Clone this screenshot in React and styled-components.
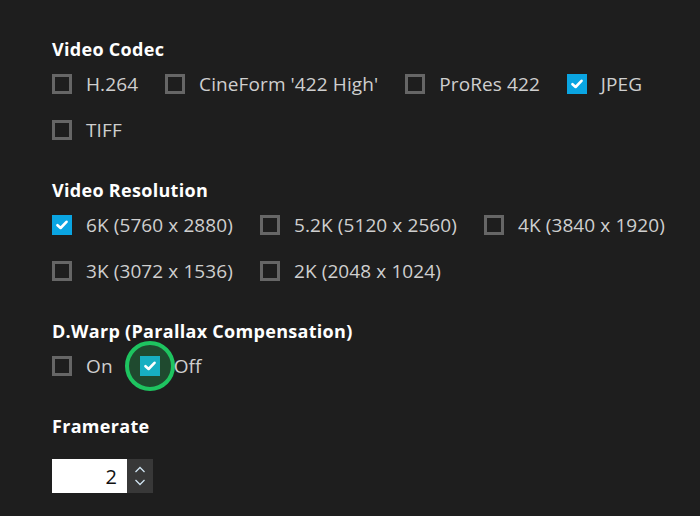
import React from "react";
import styled, { createGlobalStyle } from "styled-components";

const Global = createGlobalStyle`
  html, body { margin: 0; padding: 0; background: #1e1e1e; }
  body { font-family: "Open Sans", "Liberation Sans", sans-serif; }
`;

const Page = styled.div`
  width: 700px;
  height: 516px;
  box-sizing: border-box;
  padding: 39px 0 0 52px;
  background: #1e1e1e;
  display: flex;
  flex-direction: column;
`;

const Section = styled.section`
  display: flex;
  flex-direction: column;
  margin-bottom: 35px;
`;

const Heading = styled.h2`
  margin: 0 0 10px;
  font-family: "Open Sans", "Liberation Sans", sans-serif;
  font-weight: 700;
  font-size: 18px;
  line-height: 20px;
  letter-spacing: 0.3px;
  color: #ffffff;
`;

const Options = styled.div`
  display: flex;
  flex-wrap: wrap;
  column-gap: 27px;
  row-gap: 16px;
  max-width: 640px;
`;

const Item = styled.label`
  position: relative;
  display: flex;
  align-items: center;
  gap: 14px;
  height: 30px;
  font-size: 19px;
  font-weight: 400;
  color: #cfcfcf;
  letter-spacing: 0.1px;
`;

const Box = styled.span`
  position: relative;
  z-index: 1;
  width: 20px;
  height: 20px;
  box-sizing: border-box;
  flex: none;
  display: flex;
  align-items: center;
  justify-content: center;
  background: ${(p) => (p.$checked ? p.$color || "#0aa5e2" : "#1e1e1e")};
  border: ${(p) => (p.$checked ? "none" : "3px solid #666666")};
`;

const Ring = styled.span`
  position: absolute;
  left: -15px;
  top: -10px;
  width: 50px;
  height: 50px;
  box-sizing: border-box;
  border-radius: 50%;
  border: 4px solid #1ec460;
  background: #1f4a2f;
  z-index: 0;
`;

const LabelText = styled.span`
  position: relative;
  z-index: 1;
  white-space: nowrap;
`;

const Check = () => (
  <svg width="12" height="10" viewBox="0 0 12 10">
    <path d="M1.5 5.2 L4.6 8 L10.5 1.8" fill="none" stroke="#ffffff" strokeWidth="2.6" strokeLinecap="round" strokeLinejoin="round" />
  </svg>
);

const Option = ({ label, checked, color, ring }) => (
  <Item>
    {ring && <Ring />}
    <Box $checked={checked} $color={color}>{checked && <Check />}</Box>
    <LabelText>{label}</LabelText>
  </Item>
);

const Stepper = styled.div`
  display: flex;
  height: 34px;
  margin-top: 13px;
`;

const NumberField = styled.input`
  width: 75px;
  height: 34px;
  box-sizing: border-box;
  border: none;
  outline: none;
  background: #ffffff;
  color: #111111;
  text-align: right;
  padding: 0 10px 0 0;
  font-family: "Open Sans", "Liberation Sans", sans-serif;
  font-size: 20px;
`;

const Spin = styled.div`
  width: 26px;
  height: 34px;
  background: #383838;
  display: flex;
  flex-direction: column;
  align-items: center;
  justify-content: center;
  gap: 6px;
`;

const Chevron = ({ up }) => (
  <svg width="12" height="7" viewBox="0 0 12 7">
    <path d={up ? "M1.5 6 L6 1.5 L10.5 6" : "M1.5 1 L6 5.5 L10.5 1"} fill="none" stroke="#cfe3f0" strokeWidth="1.3" />
  </svg>
);

export default function App() {
  return (
    <>
      <Global />
      <Page>
        <Section>
          <Heading>Video Codec</Heading>
          <Options>
            <Option label="H.264" />
            <Option label="CineForm '422 High'" />
            <Option label="ProRes 422" />
            <Option label="JPEG" checked />
            <Option label="TIFF" />
          </Options>
        </Section>
        <Section>
          <Heading>Video Resolution</Heading>
          <Options>
            <Option label="6K (5760 x 2880)" checked />
            <Option label="5.2K (5120 x 2560)" />
            <Option label="4K (3840 x 1920)" />
            <Option label="3K (3072 x 1536)" />
            <Option label="2K (2048 x 1024)" />
          </Options>
        </Section>
        <Section>
          <Heading>D.Warp (Parallax Compensation)</Heading>
          <Options>
            <Option label="On" />
            <Option label="Off" checked color="#17afc1" ring />
          </Options>
        </Section>
        <Section>
          <Heading>Framerate</Heading>
          <Stepper>
            <NumberField readOnly value="2" />
            <Spin>
              <Chevron up />
              <Chevron />
            </Spin>
          </Stepper>
        </Section>
      </Page>
    </>
  );
}
